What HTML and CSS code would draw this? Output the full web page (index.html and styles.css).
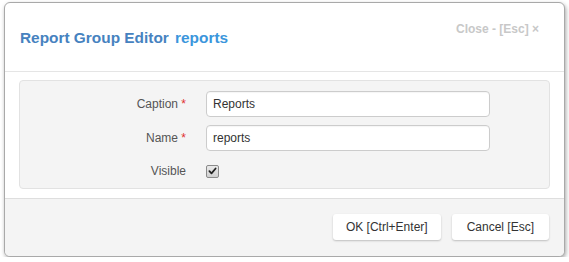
FILE: index.html
```html
<!DOCTYPE html>
<html>
<head>
<meta charset="utf-8">
<link rel="stylesheet" href="styles.css">
</head>
<body>
<div class="dialog">
  <div class="dialog-header">
    <h1 class="title">Report Group Editor <span class="title-sub">reports</span></h1>
    <span class="close">Close - [Esc] ×</span>
  </div>
  <div class="dialog-body">
    <div class="panel">
      <div class="row">
        <label class="label">Caption <span class="req">*</span></label>
        <input class="input" type="text" value="Reports">
      </div>
      <div class="row">
        <label class="label">Name <span class="req">*</span></label>
        <input class="input" type="text" value="reports">
      </div>
      <div class="row row-check">
        <label class="label">Visible</label>
        <span class="checkbox"><svg viewBox="0 0 12 12" width="12" height="12"><path d="M2.6 6.2 L4.9 8.6 L9.4 3.2" fill="none" stroke="#222" stroke-width="1.9" stroke-linecap="round" stroke-linejoin="round"/></svg></span>
      </div>
    </div>
  </div>
  <div class="dialog-footer">
    <button class="btn">OK [Ctrl+Enter]</button>
    <button class="btn">Cancel [Esc]</button>
  </div>
</div>
</body>
</html>
```

FILE: styles.css
```css
html, body {
  margin: 0;
  padding: 0;
  background: #ffffff;
}
body {
  font-family: "Liberation Sans", Arial, sans-serif;
  font-size: 12px;
  color: #333;
}
.dialog {
  margin: 2px 0 0 4px;
  width: 561px;
  height: 255px;
  box-sizing: border-box;
  border: 1px solid #a9a9a9;
  border-radius: 6px;
  background: #fff;
  box-shadow: 1px 2px 4px rgba(0,0,0,0.35);
  display: flex;
  flex-direction: column;
  overflow: hidden;
}
.dialog-header {
  height: 68px;
  border-bottom: 1px solid #e5e5e5;
  display: flex;
  align-items: flex-start;
  justify-content: space-between;
  padding: 0 25px 0 15px;
}
.title {
  margin: 26px 0 0 0;
  font-size: 15.4px;
  font-weight: bold;
  line-height: 18px;
  color: #4682bf;
}
.title-sub {
  margin-left: 2px;
  color: #3b96dc;
}
.close {
  margin-top: 18px;
  font-size: 12px;
  font-weight: bold;
  color: #c8c8c8;
  line-height: 16px;
}
.dialog-body {
  padding: 8px 14px 9px 14px;
}
.panel {
  background: #f4f4f4;
  border: 1px solid #e2e2e2;
  border-radius: 4px;
  height: 109px;
  box-sizing: border-box;
  padding: 10px 0 0 0;
  display: flex;
  flex-direction: column;
  gap: 8px;
}
.row {
  display: grid;
  grid-template-columns: 166px 284px;
  column-gap: 20px;
  align-items: center;
  height: 26px;
}
.row-check {
  margin-top: 5px;
  height: 14px;
}
.label {
  text-align: right;
  color: #555;
  font-size: 12px;
}
.req {
  color: #e03030;
}
.input {
  box-sizing: border-box;
  height: 26px;
  width: 284px;
  border: 1px solid #cccccc;
  border-radius: 4px;
  background: #fff;
  padding: 0 6px;
  font-family: "Liberation Sans", Arial, sans-serif;
  font-size: 12px;
  color: #333;
  box-shadow: inset 0 1px 1px rgba(0,0,0,0.04);
  outline: none;
}
.checkbox {
  width: 11px;
  height: 11px;
  border: 1px solid #8a8a8a;
  border-radius: 2px;
  background: linear-gradient(#eaeaea, #d0d0d0);
  display: flex;
  align-items: center;
  justify-content: center;
}
.checkbox svg {
  display: block;
}
.dialog-footer {
  flex: 1;
  background: #f4f4f4;
  border-top: 1px solid #dedede;
  display: flex;
  justify-content: flex-end;
  align-items: flex-start;
  gap: 11px;
  padding: 15px 15px 0 0;
}
.btn {
  height: 26px;
  border: none;
  border-radius: 3px;
  background: #fff;
  font-family: "Liberation Sans", Arial, sans-serif;
  font-size: 12px;
  color: #333;
  padding: 0 13px;
  box-shadow: 0 1px 2px rgba(0,0,0,0.22);
}
.btn + .btn {
  padding: 0 15px;
}
```
